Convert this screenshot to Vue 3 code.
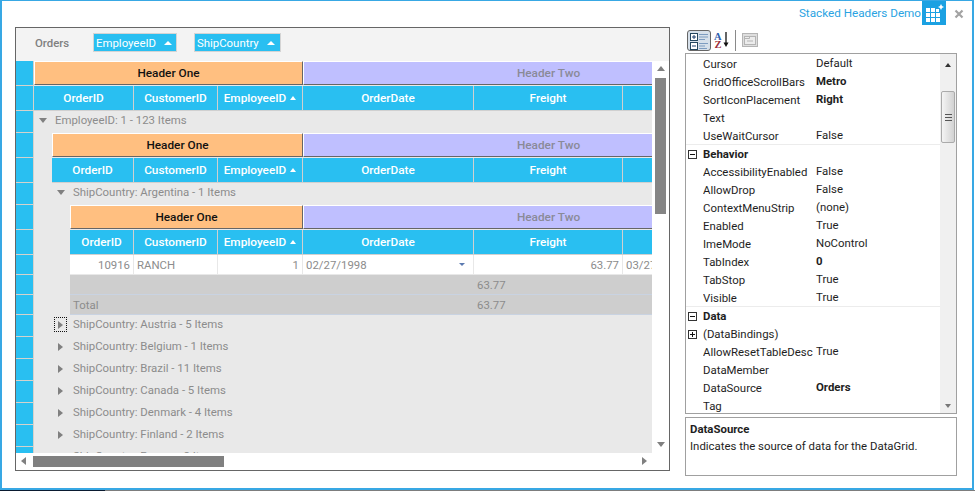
<script setup>
const chips = ['EmployeeID', 'ShipCountry']
const columns = ['CustomerID', 'EmployeeID', 'OrderDate', 'Freight', '']

const rows = [
  { type: 'stack', level: 0 },
  { type: 'cols', level: 0 },
  { type: 'caption', level: 0, open: true, text: 'EmployeeID: 1 - 123 Items' },
  { type: 'stack', level: 1 },
  { type: 'cols', level: 1 },
  { type: 'caption', level: 1, open: true, text: 'ShipCountry: Argentina - 1 Items' },
  { type: 'stack', level: 2 },
  { type: 'cols', level: 2 },
  { type: 'record', level: 2 },
  { type: 'summary', level: 2, label: '' },
  { type: 'summary', level: 2, label: 'Total' },
  { type: 'caption', level: 1, focus: true, text: 'ShipCountry: Austria - 5 Items' },
  { type: 'caption', level: 1, text: 'ShipCountry: Belgium - 1 Items' },
  { type: 'caption', level: 1, text: 'ShipCountry: Brazil - 11 Items' },
  { type: 'caption', level: 1, text: 'ShipCountry: Canada - 5 Items' },
  { type: 'caption', level: 1, text: 'ShipCountry: Denmark - 4 Items' },
  { type: 'caption', level: 1, text: 'ShipCountry: Finland - 2 Items' },
  { type: 'caption', level: 1, text: 'ShipCountry: France - 8 Items' },
]

const props = [
  { name: 'Cursor', value: 'Default' },
  { name: 'GridOfficeScrollBars', value: 'Metro', bold: true },
  { name: 'SortIconPlacement', value: 'Right', bold: true },
  { name: 'Text', value: '' },
  { name: 'UseWaitCursor', value: 'False' },
  { group: 'Behavior' },
  { name: 'AccessibilityEnabled', value: 'False' },
  { name: 'AllowDrop', value: 'False' },
  { name: 'ContextMenuStrip', value: '(none)' },
  { name: 'Enabled', value: 'True' },
  { name: 'ImeMode', value: 'NoControl' },
  { name: 'TabIndex', value: '0', bold: true },
  { name: 'TabStop', value: 'True' },
  { name: 'Visible', value: 'True' },
  { group: 'Data' },
  { name: '(DataBindings)', value: '', plus: true },
  { name: 'AllowResetTableDesc', value: 'True' },
  { name: 'DataMember', value: '' },
  { name: 'DataSource', value: 'Orders', bold: true },
  { name: 'Tag', value: '' },
]
</script>

<template>
  <div class="window">
    <header class="titlebar">
      <span class="title">Stacked Headers Demo</span>
      <span class="app-icon">
        <svg width="24" height="25" viewBox="0 0 24 25">
          <path fill="#fff" d="M4 7h4v4H4zM9 7h4v4H9zM14 8h3v3h-3zM4 12h4v4H4zM9 12h4v4H9zM14 12h4v4h-4zM4 17h4v4H4zM9 17h4v4H9zM14 17h4v4h-4z" />
          <path fill="#fff" d="M19 3l1 2 2 1-2 1-1 2-1-2-2-1 2-1z" />
        </svg>
      </span>
      <span class="close">
        <svg width="10" height="10" viewBox="0 0 10 10">
          <path d="M1.5 1.5l7 7M8.5 1.5l-7 7" stroke="#a3a3a3" stroke-width="2.2" />
        </svg>
      </span>
    </header>

    <main class="content">
      <section class="grid-panel">
        <div class="group-drop">
          <span class="orders">Orders</span>
          <span v-for="chip in chips" :key="chip" class="chip" :class="chip">
            <span>{{ chip }}</span>
            <i class="tri-up"></i>
          </span>
        </div>

        <div class="grid-main">
          <div class="viewport">
            <div v-for="(row, i) in rows" :key="i" class="row" :class="'row-' + row.type">
              <div class="row-head"></div>
              <div class="row-body">
                <div class="indent" :class="'lv' + row.level">
                  <template v-if="row.type === 'stack'">
                    <div class="stack stack-one">Header One</div>
                    <div class="stack stack-two">Header Two</div>
                  </template>

                  <template v-else-if="row.type === 'cols'">
                    <div class="cell col-cell first">OrderID</div>
                    <div v-for="c in columns" :key="c" class="cell col-cell" :class="'w-' + (c || 'Rest')">
                      {{ c }}<i v-if="c === 'EmployeeID'" class="tri-up small"></i>
                    </div>
                  </template>

                  <template v-else-if="row.type === 'caption'">
                    <span class="expander" :class="{ focused: row.focus }">
                      <i :class="row.open ? 'tri-down' : 'tri-right'"></i>
                    </span>
                    <span class="caption-text">{{ row.text }}</span>
                  </template>

                  <template v-else-if="row.type === 'record'">
                    <div class="cell rec first num">10916</div>
                    <div class="cell rec w-CustomerID">RANCH</div>
                    <div class="cell rec w-EmployeeID num">1</div>
                    <div class="cell rec w-OrderDate date">02/27/1998<i class="combo"></i></div>
                    <div class="cell rec w-Freight num">63.77</div>
                    <div class="cell rec w-Rest">03/27</div>
                  </template>

                  <template v-else>
                    <div class="cell sum first">{{ row.label }}</div>
                    <div class="cell sum w-CustomerID"></div>
                    <div class="cell sum w-EmployeeID"></div>
                    <div class="cell sum w-OrderDate"></div>
                    <div class="cell sum w-Freight">63.77</div>
                    <div class="cell sum w-Rest"></div>
                  </template>
                </div>
              </div>
            </div>
          </div>

          <div class="vscroll">
            <i class="tri-up gray"></i>
            <div class="vtrack"><div class="vthumb"></div></div>
            <i class="tri-down"></i>
          </div>
        </div>

        <div class="hscroll">
          <i class="tri-left"></i>
          <div class="htrack"><div class="hthumb"></div></div>
          <i class="tri-right"></i>
        </div>
      </section>

      <aside class="side">
        <div class="toolbar">
          <button class="tool active" type="button" aria-label="Categorized">
            <svg width="21" height="18" viewBox="0 0 21 18">
              <rect x="1.5" y="1.5" width="7" height="7" fill="#fff" stroke="#24465f" />
              <rect x="1.5" y="10.5" width="7" height="7" fill="#fff" stroke="#24465f" />
              <path d="M3 5h4M5 3v4M3 14h4" stroke="#1b3c6d" />
              <path d="M10 2.5h9M10 5h9M10 7.5h6M10 11.5h9M10 14h6M10 16.5h8" stroke="#7d9cc0" />
            </svg>
          </button>
          <span class="az">
            <svg width="19" height="20" viewBox="0 0 19 20">
              <text x="1" y="9.5" class="az-letter" fill="#2f5fae">A</text>
              <text x="1.5" y="18" class="az-letter" fill="#9c2f3a">Z</text>
              <path d="M13 2v12" stroke="#111" stroke-width="1.3" />
              <path d="M10.5 12.5h5L13 17z" fill="#111" />
            </svg>
          </span>
          <span class="tool-sep"></span>
          <span class="pages">
            <svg width="16" height="14" viewBox="0 0 16 14">
              <rect x="0.5" y="0.5" width="15" height="13" fill="#dedede" stroke="#b4b4b4" />
              <rect x="2.5" y="3.5" width="11" height="8" fill="#ececec" stroke="#b4b4b4" />
              <path d="M2.5 3.5h5v2h-5zM5 8h6" fill="none" stroke="#b4b4b4" />
            </svg>
          </span>
        </div>

        <div class="prop-grid">
          <div class="prop-list">
            <template v-for="(p, i) in props" :key="i">
              <div v-if="p.group" class="prop-group">
                <svg class="box" width="9" height="9" viewBox="0 0 9 9">
                  <rect x="0.5" y="0.5" width="8" height="8" fill="#fff" stroke="#333" />
                  <path d="M2 4.5h5" stroke="#111" />
                </svg>
                <span>{{ p.group }}</span>
              </div>
              <div v-else class="prop-row">
                <svg v-if="p.plus" class="box" width="9" height="9" viewBox="0 0 9 9">
                  <rect x="0.5" y="0.5" width="8" height="8" fill="#fff" stroke="#333" />
                  <path d="M2 4.5h5M4.5 2v5" stroke="#111" />
                </svg>
                <span v-else class="box"></span>
                <span class="prop-name">{{ p.name }}</span>
                <span class="prop-value" :class="{ bold: p.bold }">{{ p.value }}</span>
              </div>
            </template>
          </div>
          <div class="prop-scroll">
            <i class="mini-up"></i>
            <div class="prop-thumb"><span></span></div>
            <i class="mini-down"></i>
          </div>
        </div>

        <div class="help">
          <strong>DataSource</strong>
          <p>Indicates the source of data for the DataGrid.</p>
        </div>
      </aside>
    </main>
  </div>
  <div class="desktop-edge"></div>
</template>

<style>
html,
body {
  margin: 0;
  background: #fff;
}
</style>

<style scoped>
.window {
  width: 974px;
  height: 490px;
  box-sizing: border-box;
  border: 2px solid #38a8e4;
  border-top-width: 1px;
  overflow: hidden;
  background: #fff;
  font-family: Roboto, "Liberation Sans", sans-serif;
  font-size: 11.4px;
}

.desktop-edge {
  width: 975px;
  height: 1px;
  background: linear-gradient(90deg, #0a1a30 105px, #7d7d7d 105px);
}

.titlebar {
  height: 26px;
  display: flex;
  justify-content: flex-end;
  align-items: flex-start;
}

.title {
  margin: 4px 0 0;
  color: #2aa3e2;
  font-size: 11.7px;
  line-height: 17px;
}

.app-icon {
  width: 24px;
  height: 24px;
  margin-left: 1px;
  background: #1ba1e2;
  overflow: hidden;
}

.close {
  width: 26px;
  height: 24px;
  padding: 7px 0 0 8px;
  box-sizing: border-box;
}

.content {
  display: flex;
  padding-left: 13px;
}

.grid-panel {
  width: 655px;
  height: 444px;
  box-sizing: border-box;
  border: 1px solid #666;
  background: #fff;
}

.group-drop {
  height: 33px;
  display: flex;
  align-items: flex-start;
  padding-top: 5px;
  box-sizing: border-box;
  background: #f3f3f3;
}

.orders {
  margin: 0 0 0 19px;
  width: 58px;
  line-height: 21px;
  color: #808080;
  font-weight: 500;
}

.chip {
  height: 19px;
  box-sizing: border-box;
  display: flex;
  align-items: center;
  justify-content: space-between;
  padding: 0 4px 0 2px;
  background: #29bff1;
  border: 1px solid #d4d4d4;
  color: #fff;
}

.chip.EmployeeID {
  width: 84px;
  margin-right: 17px;
}

.chip.ShipCountry {
  width: 87px;
  padding-right: 5px;
}

.grid-main {
  display: flex;
  height: 392px;
}

.viewport {
  width: 636px;
  height: 392px;
  overflow: hidden;
}

.row {
  display: flex;
}

.row-head {
  width: 18px;
  flex: none;
  box-sizing: border-box;
  background: #29bff1;
  border-bottom: 1px solid #d6d2cc;
  border-right: 1px solid #d6d2cc;
}

.row-body {
  width: 618px;
  background: #e9e9e9;
  overflow: hidden;
}

.indent {
  display: flex;
  height: 100%;
  box-sizing: border-box;
}

.lv1 {
  padding-left: 18px;
}

.lv2 {
  padding-left: 36px;
}

.row-stack {
  height: 25px;
}

.row-cols {
  height: 25px;
}

.row-caption {
  height: 22px;
}

.row-record,
.row-summary {
  height: 20px;
}

.stack {
  height: 24px;
  box-sizing: border-box;
  display: flex;
  align-items: center;
  justify-content: center;
  border-top: 1px solid #fff;
  border-left: 1px solid #fff;
  border-bottom: 1px solid #666;
  font-size: 11.8px;
  font-weight: 500;
}

.stack-one {
  flex: 1;
  min-width: 0;
  background: #ffbf80;
  color: #111;
  border-right: 1px solid #666;
}

.stack-two {
  width: 349px;
  flex: none;
  background: #bfbfff;
  color: #8a8a98;
  white-space: nowrap;
  padding-left: 141px;
}

.cell {
  box-sizing: border-box;
  display: flex;
  align-items: center;
  white-space: nowrap;
  overflow: hidden;
}

.first {
  flex: 1;
  min-width: 0;
}

.w-CustomerID {
  width: 84px;
  flex: none;
}

.w-EmployeeID {
  width: 85px;
  flex: none;
}

.w-OrderDate {
  width: 171px;
  flex: none;
}

.w-Freight {
  width: 149px;
  flex: none;
}

.w-Rest {
  width: 29px;
  flex: none;
}

.col-cell {
  justify-content: center;
  gap: 4px;
  background: #29bff1;
  color: #fff;
  font-size: 11.8px;
  font-weight: 500;
  border-right: 1px solid #d0d0d0;
  border-bottom: 1px solid #d0d0d0;
}

.col-cell.w-Rest {
  border-right: 0;
}

.rec {
  padding: 0 3px;
  background: #fff;
  color: #8c8c8c;
  border-right: 1px solid #e8e8e8;
  border-bottom: 1px solid #e8e8e8;
}

.rec.w-Rest {
  padding: 0 0 0 3px;
  border-right: 0;
}

.num {
  justify-content: flex-end;
}

.date {
  justify-content: space-between;
}

.combo {
  width: 0;
  height: 0;
  margin-right: 5px;
  border: 3px solid transparent;
  border-top: 3px solid #5a79b0;
  border-bottom: 0;
}

.sum {
  padding-left: 3px;
  background: #cecece;
  color: #8c8c8c;
  border-bottom: 1px solid #c9d3e2;
}

.expander {
  width: 11px;
  height: 13px;
  margin: 3px 7px 0 3px;
  box-sizing: border-box;
  display: flex;
  align-items: center;
  justify-content: center;
  flex: none;
}

.expander.focused {
  outline: 1px dotted #111;
}

.caption-text {
  height: 21px;
  line-height: 18px;
  color: #8c8c8c;
  white-space: nowrap;
}

i {
  display: block;
  flex: none;
}

.tri-up {
  width: 0;
  height: 0;
  border: 4px solid transparent;
  border-top: 0;
  border-bottom: 4px solid #fff;
}

.tri-up.small {
  border-width: 0 3.5px 4px;
}

.tri-up.gray {
  border-bottom-color: #808080;
  border-width: 0 4.5px 5px;
}

.tri-down {
  width: 0;
  height: 0;
  border: 4.5px solid transparent;
  border-bottom: 0;
  border-top: 5px solid #808080;
}

.tri-right {
  width: 0;
  height: 0;
  border: 4.5px solid transparent;
  border-right: 0;
  border-left: 5px solid #808080;
}

.tri-left {
  width: 0;
  height: 0;
  border: 4.5px solid transparent;
  border-left: 0;
  border-right: 5px solid #808080;
}

.vscroll {
  width: 17px;
  height: 392px;
  box-sizing: border-box;
  display: flex;
  flex-direction: column;
  align-items: center;
  padding: 5px 0 6px;
}

.vtrack {
  flex: 1;
  width: 11px;
  padding-top: 7px;
}

.vthumb {
  height: 136px;
  background: #858585;
}

.hscroll {
  height: 16px;
  display: flex;
  align-items: center;
  padding: 0 22px 0 5px;
}

.htrack {
  flex: 1;
  padding: 0 0 0 7px;
}

.hthumb {
  width: 191px;
  height: 11px;
  background: #808080;
}

.side {
  width: 272px;
  margin-left: 15px;
  display: flex;
  flex-direction: column;
}

.toolbar {
  height: 23px;
  display: flex;
  align-items: flex-start;
  margin-top: 3px;
  padding-left: 2px;
}

.tool {
  width: 24px;
  height: 21px;
  padding: 0 0 0 1px;
  display: flex;
  align-items: center;
  justify-content: center;
  box-sizing: border-box;
  border: 1px solid #666;
  border-radius: 3px;
  background: #d6e0ea;
}

.az {
  margin: 0 0 0 2px;
}

.az-letter {
  font-family: "Liberation Serif", serif;
  font-size: 10.5px;
  font-weight: 700;
}

.tool-sep {
  width: 1px;
  height: 21px;
  margin: 0 0 0 3px;
  background: #8a8a8a;
}

.pages {
  margin: 3px 0 0 6px;
  line-height: 0;
}

.prop-grid {
  height: 361px;
  box-sizing: border-box;
  display: flex;
  border: 1px solid #a0a0a0;
  overflow: hidden;
  color: #1e1e1e;
}

.prop-list {
  width: 254px;
  flex: none;
}

.prop-row,
.prop-group {
  height: 18px;
  display: flex;
  align-items: center;
  box-sizing: border-box;
}

.prop-row {
  padding-top: 2px;
}

.prop-group {
  padding-top: 1px;
  font-weight: 700;
  border-top: 1px solid #ececec;
}

.box {
  width: 9px;
  height: 9px;
  margin: 0 6px 0 2px;
  flex: none;
}

.prop-name {
  width: 113px;
  flex: none;
  white-space: nowrap;
  overflow: hidden;
}

.prop-value {
  margin-top: -2px;
  white-space: nowrap;
}

.bold {
  font-weight: 700;
}

.prop-scroll {
  flex: 1;
  display: flex;
  flex-direction: column;
  align-items: center;
  background: #f0f0f0;
  padding: 9px 0 5px;
  box-sizing: border-box;
}

.prop-thumb {
  width: 14px;
  height: 52px;
  margin-top: 24px;
  margin-bottom: auto;
  box-sizing: border-box;
  display: flex;
  align-items: center;
  justify-content: center;
  border: 1px solid #aaa;
  border-radius: 2px;
  background: linear-gradient(90deg, #f4f4f4, #d2d2d2);
}

.prop-thumb span {
  width: 7px;
  height: 7px;
  box-sizing: border-box;
  border-top: 1px solid #555;
  border-bottom: 1px solid #555;
  background: linear-gradient(#0000 2px, #555 2px, #555 3px, #0000 3px);
}

.mini-up {
  width: 0;
  height: 0;
  border: 3.5px solid transparent;
  border-top: 0;
  border-bottom: 4px solid #333;
}

.mini-down {
  width: 0;
  height: 0;
  border: 3.5px solid transparent;
  border-bottom: 0;
  border-top: 4px solid #777;
}

.help {
  height: 59px;
  margin-top: 3px;
  padding: 3px 4px;
  box-sizing: border-box;
  border: 1px solid #a0a0a0;
  color: #1e1e1e;
}

.help strong {
  display: block;
  font-weight: 700;
  line-height: 16px;
}

.help p {
  margin: 1px 0 0;
  line-height: 17px;
}
</style>
